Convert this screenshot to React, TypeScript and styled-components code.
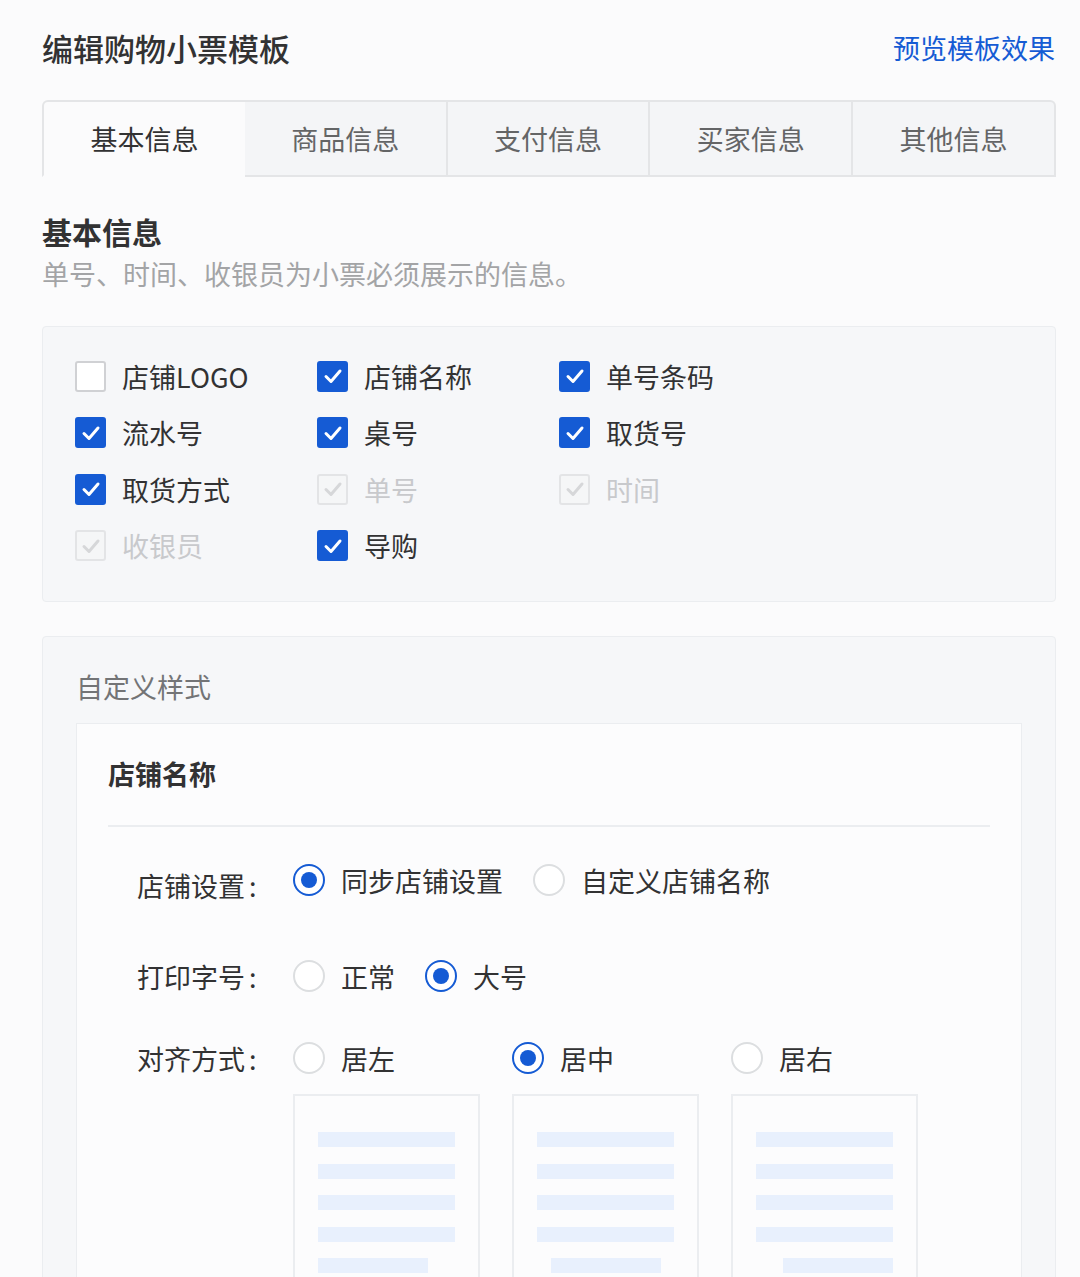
import React from "react";
import styled, { createGlobalStyle } from "styled-components";

const BLUE = "#155bd4";

const Global = createGlobalStyle`
  html, body { margin: 0; padding: 0; background: #fbfbfc; }
  body { font-family: "Noto Sans CJK SC", "Noto Sans", sans-serif; color: #323233; }
  * { box-sizing: border-box; }
`;

const Page = styled.div`
  padding: 28px 24px 0 42px;
  width: 1080px;
  height: 1277px;
  overflow: hidden;
`;

const Header = styled.div`
  display: flex;
  justify-content: space-between;
  align-items: center;
  height: 40px;
`;

const Title = styled.h1`
  margin: 0;
  font-size: 31px;
  font-weight: 500;
  color: #323233;
  line-height: 40px;
`;

const Link = styled.a`
  font-size: 27px;
  color: ${BLUE};
  line-height: 40px;
  cursor: pointer;
  margin-right: 1px;
`;

const Tabs = styled.div`
  margin-top: 32px;
  display: grid;
  grid-template-columns: repeat(5, 1fr);
  height: 77px;
`;

const Tab = styled.div<{ $active?: boolean; $first?: boolean; $last?: boolean }>`
  display: flex;
  align-items: center;
  justify-content: center;
  font-size: 27px;
  color: ${(p) => (p.$active ? "#323233" : "#646566")};
  background: ${(p) => (p.$active ? "#fbfbfc" : "#f4f5f7")};
  border: 2px solid #e4e5e7;
  border-left-width: ${(p) => (p.$first ? "2px" : "0")};
  border-right-width: ${(p) => (p.$active ? "0" : "2px")};
  border-bottom-color: ${(p) => (p.$active ? "transparent" : "#e4e5e7")};
  border-top-left-radius: ${(p) => (p.$first ? "6px" : "0")};
  border-top-right-radius: ${(p) => (p.$last ? "6px" : "0")};
`;

const SectionTitle = styled.h2`
  margin: 34px 0 0;
  font-size: 30px;
  font-weight: 700;
  line-height: 40px;
  color: #323233;
`;

const SectionDesc = styled.p`
  margin: 5px 0 0;
  font-size: 27px;
  line-height: 36px;
  color: #a3a4a6;
`;

const Panel = styled.div`
  margin-top: 34px;
  background: #f6f7f9;
  border: 1px solid #ebedf0;
  border-radius: 4px;
`;

const CheckGrid = styled.div`
  display: grid;
  grid-template-columns: repeat(3, 242px);
  grid-auto-rows: 56.5px;
  padding: 21px 0 27px 32px;
`;

const CheckItem = styled.label<{ $disabled?: boolean }>`
  display: flex;
  align-items: center;
  gap: 16px;
  font-size: 27px;
  color: ${(p) => (p.$disabled ? "#c8c9cc" : "#323233")};
`;

const Box = styled.span<{ $checked?: boolean; $disabled?: boolean }>`
  width: 31px;
  height: 31px;
  border-radius: 3px;
  display: flex;
  align-items: center;
  justify-content: center;
  flex: none;
  background: ${(p) => (p.$disabled ? "#f5f6f7" : p.$checked ? BLUE : "#fff")};
  border: 2px solid
    ${(p) => (p.$disabled ? "#e3e4e6" : p.$checked ? BLUE : "#d0d1d4")};
`;

const CustomPanel = styled(Panel)`
  padding: 30px 33px 0 33px;
  height: 700px;
`;

const PanelTitle = styled.div`
  font-size: 27px;
  line-height: 40px;
  color: #737476;
`;

const Card = styled.div`
  margin-top: 16px;
  background: #fcfcfd;
  border: 1px solid #ebedf0;
  padding: 31px 31px 0 31px;
  height: 700px;
`;

const CardTitle = styled.div`
  font-size: 27px;
  font-weight: 700;
  line-height: 38px;
  color: #323233;
`;

const Divider = styled.div`
  margin-top: 32px;
  height: 2px;
  background: #ebedf0;
`;

const Form = styled.div`
  padding-left: 29px;
  padding-top: 33px;
`;

const Row = styled.div<{ $mt?: number }>`
  display: flex;
  align-items: center;
  height: 40px;
  margin-top: ${(p) => p.$mt ?? 0}px;
`;

const FieldLabel = styled.div<{ $shift?: number }>`
  width: 156px;
  flex: none;
  font-size: 27px;
  color: #323233;
  position: relative;
  top: ${(p) => p.$shift ?? 0}px;
`;

const Colon = styled.span`
  margin-left: 4px;
`;

const RadioGroup = styled.div`
  display: flex;
  align-items: center;
  gap: 30px;
`;

const AlignGroup = styled.div`
  display: grid;
  grid-template-columns: repeat(3, 187px);
  column-gap: 32px;
`;

const RadioItem = styled.label`
  display: flex;
  align-items: center;
  gap: 16px;
  font-size: 27px;
  color: #323233;
`;

const RadioCircle = styled.span<{ $checked?: boolean }>`
  width: 32px;
  height: 32px;
  border-radius: 50%;
  flex: none;
  display: flex;
  align-items: center;
  justify-content: center;
  background: #fff;
  border: ${(p) => (p.$checked ? `2px solid ${BLUE}` : "2px solid #dcdee0")};
  &::after {
    content: "";
    width: 16px;
    height: 16px;
    border-radius: 50%;
    background: ${BLUE};
    display: ${(p) => (p.$checked ? "block" : "none")};
  }
`;

const Previews = styled.div`
  margin-top: 16px;
  margin-left: 156px;
  display: grid;
  grid-template-columns: repeat(3, 187px);
  column-gap: 32px;
`;

const Preview = styled.div<{ $align: "flex-start" | "center" | "flex-end" }>`
  height: 240px;
  border: 2px solid #ebedf0;
  border-bottom: none;
  background: #fcfcfd;
  padding: 36px 23px 0;
  display: flex;
  flex-direction: column;
  align-items: ${(p) => p.$align};
  gap: 16.5px;
`;

const Line = styled.div<{ $short?: boolean }>`
  height: 15px;
  width: ${(p) => (p.$short ? "110px" : "100%")};
  background: #e8f0fd;
`;

const Check = () => (
  <svg width="22" height="22" viewBox="0 0 22 22">
    <polyline
      points="4,11.5 9,16.5 18,6"
      fill="none"
      stroke="currentColor"
      strokeWidth="3"
      strokeLinecap="round"
      strokeLinejoin="round"
    />
  </svg>
);

type Item = { label: string; checked?: boolean; disabled?: boolean };

const items: Item[] = [
  { label: "店铺LOGO" },
  { label: "店铺名称", checked: true },
  { label: "单号条码", checked: true },
  { label: "流水号", checked: true },
  { label: "桌号", checked: true },
  { label: "取货号", checked: true },
  { label: "取货方式", checked: true },
  { label: "单号", checked: true, disabled: true },
  { label: "时间", checked: true, disabled: true },
  { label: "收银员", checked: true, disabled: true },
  { label: "导购", checked: true },
];

const tabs = ["基本信息", "商品信息", "支付信息", "买家信息", "其他信息"];

const Radio = ({ label, checked }: { label: string; checked?: boolean }) => (
  <RadioItem>
    <RadioCircle $checked={checked} />
    {label}
  </RadioItem>
);

export default function App() {
  return (
    <Page>
      <Global />
      <Header>
        <Title>编辑购物小票模板</Title>
        <Link>预览模板效果</Link>
      </Header>
      <Tabs>
        {tabs.map((t, i) => (
          <Tab key={t} $active={i === 0} $first={i === 0} $last={i === tabs.length - 1}>
            {t}
          </Tab>
        ))}
      </Tabs>
      <SectionTitle>基本信息</SectionTitle>
      <SectionDesc>单号、时间、收银员为小票必须展示的信息。</SectionDesc>
      <Panel>
        <CheckGrid>
          {items.map((it) => (
            <CheckItem key={it.label} $disabled={it.disabled}>
              <Box
                $checked={it.checked}
                $disabled={it.disabled}
                style={{ color: it.disabled ? "#d6d7d9" : "#fff" }}
              >
                {it.checked && <Check />}
              </Box>
              {it.label}
            </CheckItem>
          ))}
        </CheckGrid>
      </Panel>
      <CustomPanel>
        <PanelTitle>自定义样式</PanelTitle>
        <Card>
          <CardTitle>店铺名称</CardTitle>
          <Divider />
          <Form>
            <Row>
              <FieldLabel $shift={5}>
                店铺设置<Colon>:</Colon>
              </FieldLabel>
              <RadioGroup>
                <Radio label="同步店铺设置" checked />
                <Radio label="自定义店铺名称" />
              </RadioGroup>
            </Row>
            <Row $mt={56}>
              <FieldLabel>
                打印字号<Colon>:</Colon>
              </FieldLabel>
              <RadioGroup>
                <Radio label="正常" />
                <Radio label="大号" checked />
              </RadioGroup>
            </Row>
            <Row $mt={42}>
              <FieldLabel>
                对齐方式<Colon>:</Colon>
              </FieldLabel>
              <AlignGroup>
                <Radio label="居左" />
                <Radio label="居中" checked />
                <Radio label="居右" />
              </AlignGroup>
            </Row>
            <Previews>
              {(["flex-start", "center", "flex-end"] as const).map((a) => (
                <Preview key={a} $align={a}>
                  <Line />
                  <Line />
                  <Line />
                  <Line />
                  <Line $short />
                </Preview>
              ))}
            </Previews>
          </Form>
        </Card>
      </CustomPanel>
    </Page>
  );
}
